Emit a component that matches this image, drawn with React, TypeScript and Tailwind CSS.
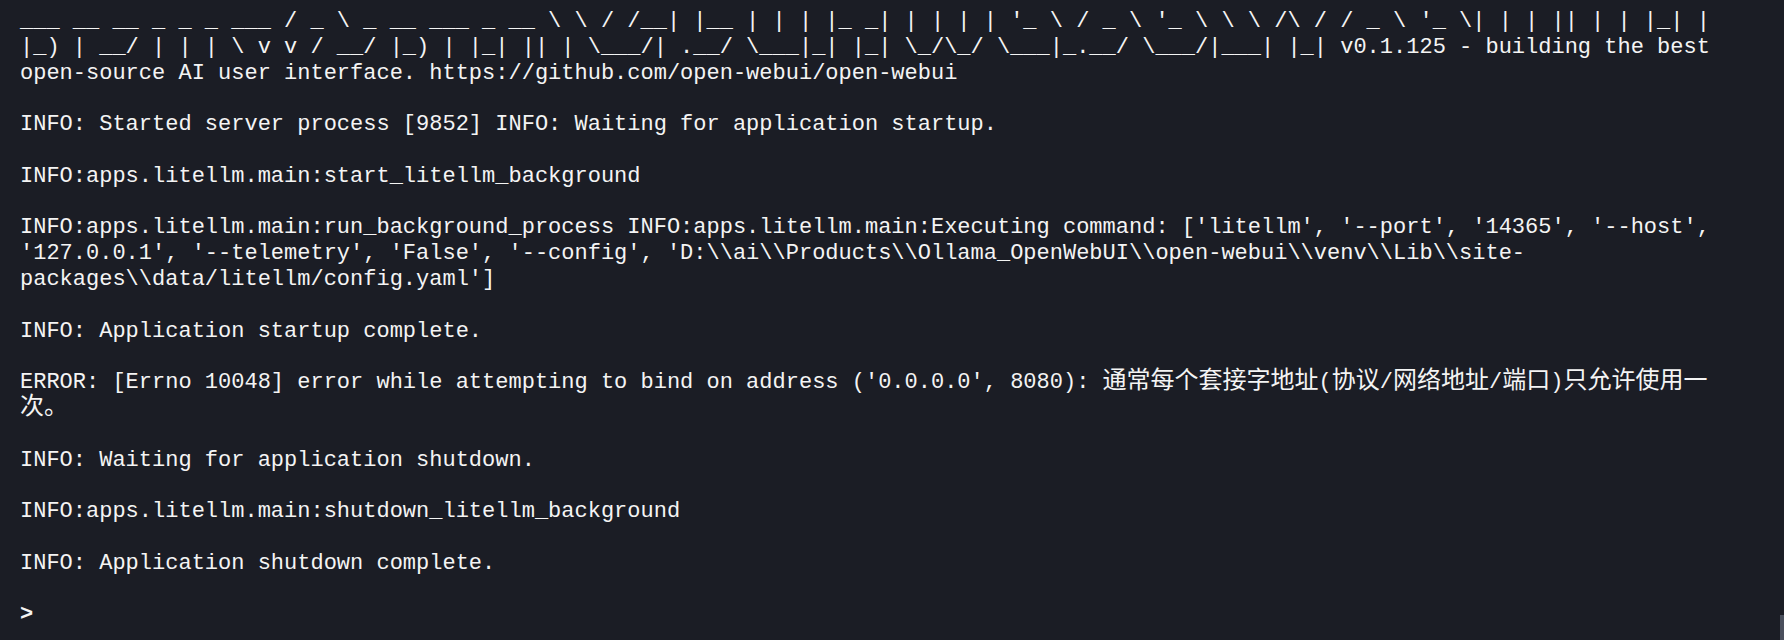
import React from "react";

const CJK = ({ children }: { children: React.ReactNode }) => (
  <span className="text-[24px] leading-[0] [font-family:'Noto_Sans_CJK_SC','Noto_Sans_CJK_JP',sans-serif]">{children}</span>
);

export default function App() {
  const banner =
    "___ __ __ _ _ _ ___ / _ \\ _ __ ___ _ __ \\ \\ / /__| |__ | | | |_ _| | | | | '_ \\ / _ \\ '_ \\ \\ \\ /\\ / / _ \\ '_ \\| | | || | | |_| | |_) | __/ | | | \\ v v / __/ |_) | |_| || | \\___/| .__/ \\___|_| |_| \\_/\\_/ \\___|_.__/ \\___/|___| |_| v0.1.125 - building the best open-source AI user interface. https://github.com/open-webui/open-webui";

  const paras: React.ReactNode[] = [
    banner,
    "INFO: Started server process [9852] INFO: Waiting for application startup.",
    "INFO:apps.litellm.main:start_litellm_background",
    "INFO:apps.litellm.main:run_background_process INFO:apps.litellm.main:Executing command: ['litellm', '--port', '14365', '--host', '127.0.0.1', '--telemetry', 'False', '--config', 'D:\\\\ai\\\\Products\\\\Ollama_OpenWebUI\\\\open-webui\\\\venv\\\\Lib\\\\site-packages\\\\data/litellm/config.yaml']",
    "INFO: Application startup complete.",
    <>
      ERROR: [Errno 10048] error while attempting to bind on address ('0.0.0.0', 8080): <CJK>通常每个套接字地址</CJK>(<CJK>协议</CJK>/<CJK>网络地址</CJK>/<CJK>端口</CJK>)<CJK>只允许使用一次。</CJK>
    </>,
    "INFO: Waiting for application shutdown.",
    "INFO:apps.litellm.main:shutdown_litellm_background",
    "INFO: Application shutdown complete.",
  ];

  return (
    <div className="relative h-[640px] w-full overflow-hidden bg-[#1b1d25] text-[#f4f4f4]">
      <div className="flex flex-col gap-[25.8px] pl-[20px] pr-[64px] pt-[9px] text-[22px] leading-[25.8px] [font-family:'Liberation_Mono','DejaVu_Sans_Mono',monospace]">
        {paras.map((p, i) => (
          <p key={i} className="break-words">
            {p}
          </p>
        ))}
        <p className="font-bold">&gt;</p>
      </div>
      <div className="absolute bottom-0 right-0 h-[25px] w-[4px] bg-[#4a4f5c]" />
    </div>
  );
}
